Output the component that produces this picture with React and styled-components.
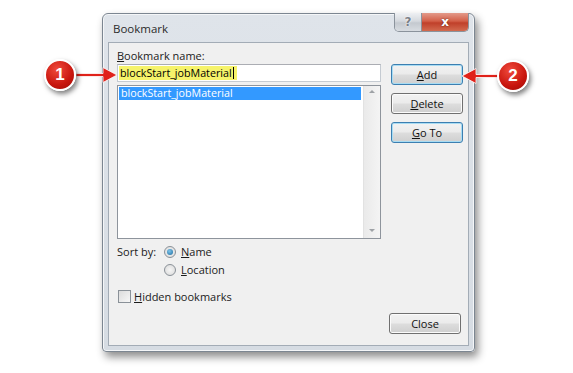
import React from "react";
import styled, { createGlobalStyle } from "styled-components";

const GlobalStyle = createGlobalStyle`
  html, body {
    margin: 0;
    padding: 0;
    background: #ffffff;
  }
  body {
    font-family: "Open Sans", "Noto Sans", sans-serif;
    font-size: 11px;
    color: #1b1b1b;
  }
`;

const Page = styled.div`
  position: relative;
  width: 573px;
  height: 373px;
  padding: 13px 0 0 102px;
  box-sizing: border-box;
  overflow: hidden;
`;

const Window = styled.div`
  width: 373px;
  height: 339px;
  box-sizing: border-box;
  display: flex;
  flex-direction: column;
  padding: 0 5px 5px 5px;
  background: linear-gradient(to bottom, #dfe4ea, #d6dce3);
  border: 1px solid #7c8691;
  border-radius: 6px 6px 4px 4px;
  box-shadow: 3px 5px 9px rgba(0, 0, 0, 0.45), inset 0 0 0 1px #f4f6f8;
`;

const TitleBar = styled.div`
  height: 28px;
  display: flex;
  align-items: flex-start;
  flex-shrink: 0;
`;

const Title = styled.div`
  padding: 7px 0 0 5px;
  font-size: 11.5px;
  color: #2b2b2b;
`;

const Caption = styled.div`
  margin-left: auto;
  margin-top: -1px;
  display: flex;
  border: 1px solid #8b939c;
  border-top: none;
  border-radius: 0 0 5px 5px;
  overflow: hidden;
`;

const CaptionButton = styled.div`
  width: ${(p) => p.$w}px;
  height: 18px;
  display: flex;
  align-items: center;
  justify-content: center;
  font-family: "DejaVu Sans", sans-serif;
  font-weight: bold;
  font-size: ${(p) => (p.$close ? 12 : 12)}px;
  color: ${(p) => (p.$close ? "#ffffff" : "#7a8087")};
  text-shadow: ${(p) =>
    p.$close
      ? "0 0 2px rgba(0, 0, 0, 0.6)"
      : "0 0 1px #ffffff, 0 0 2px #ffffff"};
  background: ${(p) =>
    p.$close
      ? "linear-gradient(to bottom, #e39a8a, #d35f48 45%, #c0402a 55%, #d26a4f)"
      : "linear-gradient(to bottom, #eef0f3, #d5d9de 45%, #c4c9cf 55%, #d8dce1)"};
  border-left: ${(p) => (p.$close ? "1px solid #8b939c" : "none")};
`;

const Client = styled.div`
  flex: 1;
  display: flex;
  flex-direction: column;
  padding: 5px 7px 11px 8px;
  background: #f0f0f0;
  border: 1px solid #a3acb6;
`;

const TopGrid = styled.div`
  display: grid;
  grid-template-columns: 264px 72px;
  column-gap: 10px;
`;

const LeftCol = styled.div`
  display: flex;
  flex-direction: column;
`;

const RightCol = styled.div`
  display: flex;
  flex-direction: column;
  gap: 8px;
  padding-top: 16px;
`;

const Label = styled.div`
  height: 16px;
  line-height: 15px;
`;

const U = styled.span`
  text-decoration: underline;
  text-underline-offset: 1px;
`;

const TextField = styled.div`
  height: 18px;
  box-sizing: border-box;
  display: flex;
  align-items: stretch;
  padding: 1px;
  background: #ffffff;
  border: 1px solid #c5cbd2;
  border-top-color: #abadb3;
`;

const Highlight = styled.span`
  display: flex;
  align-items: center;
  padding: 0 3px 0 1px;
  background: #f6f36a;
  color: #000;
  font-size: 10.7px;
`;

const Caret = styled.span`
  width: 1px;
  height: 12px;
  margin-left: 1px;
  background: #000;
`;

const ListBox = styled.div`
  margin-top: 3px;
  height: 154px;
  box-sizing: border-box;
  display: flex;
  background: #ffffff;
  border: 1px solid #8e949c;
`;

const Items = styled.div`
  flex: 1;
  padding: 1px 2px 0 1px;
`;

const Item = styled.div`
  height: 13px;
  line-height: 12px;
  padding-left: 2px;
  font-size: 10.7px;
  color: ${(p) => (p.$selected ? "#ffffff" : "#000")};
  background: ${(p) => (p.$selected ? "#3399ff" : "transparent")};
`;

const ScrollBar = styled.div`
  width: 16px;
  display: flex;
  flex-direction: column;
  justify-content: space-between;
  align-items: center;
  padding: 4px 0 6px;
  background: linear-gradient(to right, #eaeaea, #f4f4f4);
  border-left: 1px solid #e2e2e2;
`;

const Arrow = styled.div`
  width: 0;
  height: 0;
  border-left: 3px solid transparent;
  border-right: 3px solid transparent;
  ${(p) =>
    p.$down
      ? "border-top: 3px solid #9ea2a6;"
      : "border-bottom: 3px solid #9ea2a6;"}
`;

const Button = styled.div`
  width: 72px;
  height: 21px;
  box-sizing: border-box;
  display: flex;
  align-items: center;
  justify-content: center;
  border-radius: 3px;
  border: 1px solid ${(p) => (p.$focus ? "#3c7fb1" : "#707070")};
  box-shadow: ${(p) =>
    p.$focus ? "inset 0 0 0 1px #a8dcf3" : "inset 0 0 0 1px #fbfbfb"};
  background: linear-gradient(to bottom, #f2f2f2, #ebebeb 48%, #dddddd 52%, #cfcfcf);
  color: #111;
`;

const CloseButton = styled(Button)`
  margin-top: auto;
  align-self: flex-end;
`;

const SortRow = styled.div`
  margin-top: 6px;
  display: grid;
  grid-template-columns: 47px auto;
  row-gap: 5px;
  align-items: center;
  line-height: 13px;
`;

const Option = styled.div`
  display: flex;
  align-items: center;
  gap: 5px;
  grid-column: 2;
`;

const Radio = styled.span`
  width: 12px;
  height: 12px;
  box-sizing: border-box;
  border-radius: 50%;
  border: 1px solid #8a9198;
  background: radial-gradient(circle, #f6f6f6, #d8d8d8);
  display: flex;
  align-items: center;
  justify-content: center;
  &::after {
    content: "";
    display: ${(p) => (p.$checked ? "block" : "none")};
    width: 6px;
    height: 6px;
    border-radius: 50%;
    background: radial-gradient(circle at 40% 35%, #7ec4ea, #1e6c9f);
  }
`;

const CheckRow = styled.div`
  margin-top: 14px;
  margin-left: 1px;
  display: flex;
  align-items: center;
  gap: 3px;
  line-height: 13px;
`;

const CheckBox = styled.span`
  width: 13px;
  height: 13px;
  box-sizing: border-box;
  border: 1px solid #8a9198;
  background: linear-gradient(135deg, #dcdcdc, #f7f7f7);
`;

const Callout = styled.div`
  position: absolute;
  left: ${(p) => p.$x}px;
  top: ${(p) => p.$y}px;
  width: 32px;
  height: 32px;
  box-sizing: border-box;
  border-radius: 50%;
  border: 2px solid #ffffff;
  background: radial-gradient(circle at 40% 30%, #f04a3c, #c8150d 60%, #9c0b06);
  box-shadow: 2px 3px 5px rgba(0, 0, 0, 0.5);
  display: flex;
  align-items: center;
  justify-content: center;
  color: #ffffff;
  font-family: "Liberation Sans", Arial, sans-serif;
  font-weight: bold;
  font-size: 17px;
`;

const ArrowSvg = styled.svg`
  position: absolute;
  left: ${(p) => p.$x}px;
  top: ${(p) => p.$y}px;
  overflow: visible;
`;

export default function App() {
  return (
    <>
      <GlobalStyle />
      <Page>
        <Window>
          <TitleBar>
            <Title>Bookmark</Title>
            <Caption>
              <CaptionButton $w={26}>?</CaptionButton>
              <CaptionButton $w={46} $close>
                x
              </CaptionButton>
            </Caption>
          </TitleBar>
          <Client>
            <TopGrid>
              <LeftCol>
                <Label>
                  <U>B</U>ookmark name:
                </Label>
                <TextField>
                  <Highlight>
                    blockStart_jobMaterial
                    <Caret />
                  </Highlight>
                </TextField>
                <ListBox>
                  <Items>
                    <Item $selected>blockStart_jobMaterial</Item>
                  </Items>
                  <ScrollBar>
                    <Arrow />
                    <Arrow $down />
                  </ScrollBar>
                </ListBox>
              </LeftCol>
              <RightCol>
                <Button $focus>
                  <U>A</U>dd
                </Button>
                <Button>
                  <U>D</U>elete
                </Button>
                <Button $focus>
                  <U>G</U>o To
                </Button>
              </RightCol>
            </TopGrid>
            <SortRow>
              <span>Sort by:</span>
              <Option>
                <Radio $checked />
                <span>
                  <U>N</U>ame
                </span>
              </Option>
              <Option>
                <Radio />
                <span>
                  <U>L</U>ocation
                </span>
              </Option>
            </SortRow>
            <CheckRow>
              <CheckBox />
              <span>
                <U>H</U>idden bookmarks
              </span>
            </CheckRow>
            <CloseButton>Close</CloseButton>
          </Client>
        </Window>

        <ArrowSvg $x={76} $y={67} width="42" height="16">
          <path
            d="M0 6.5 H27 V0.5 L41 8 L27 15.5 V9.5 H0 Z"
            fill="#e0221a"
            stroke="#ffffff"
            strokeWidth="0.8"
          />
        </ArrowSvg>
        <Callout $x={44} $y={59}>1</Callout>

        <ArrowSvg $x={462} $y={68} width="38" height="16">
          <path
            d="M37 6.5 H14 V0.5 L0 8 L14 15.5 V9.5 H37 Z"
            fill="#e0221a"
            stroke="#ffffff"
            strokeWidth="0.8"
          />
        </ArrowSvg>
        <Callout $x={497} $y={60}>2</Callout>
      </Page>
    </>
  );
}
